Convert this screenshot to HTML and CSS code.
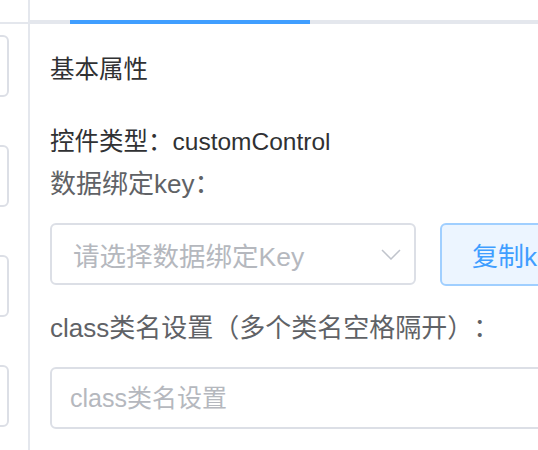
FILE: index.html
```html
<!DOCTYPE html>
<html lang="zh-CN">
<head>
  <meta charset="UTF-8">
  <meta name="viewport" content="width=device-width, initial-scale=1.0">
  <title>控件属性</title>
  <link rel="stylesheet" href="styles.css">
</head>
<body>
  <div class="page">
    <aside class="side">
      <div class="side-head"></div>
      <div class="side-list">
        <div class="side-box"></div>
        <div class="side-box"></div>
        <div class="side-box"></div>
        <div class="side-box"></div>
      </div>
    </aside>
    <section class="panel">
      <div class="tabs">
        <div class="tab active"></div>
      </div>
      <div class="panel-body">
        <h3 class="title">基本属性</h3>
        <div class="info">控件类型：customControl</div>
        <label class="label first">数据绑定key：</label>
        <div class="key-row">
          <div class="select">
            <span class="placeholder">请选择数据绑定Key</span>
            <svg class="arrow" width="20" height="11" viewBox="0 0 20 11">
              <polyline points="1,1 10,10 19,1" fill="none" stroke="#c0c4cc" stroke-width="1.5"/>
            </svg>
          </div>
          <button class="btn-copy">复制key</button>
        </div>
        <label class="label second">class类名设置（多个类名空格隔开）：</label>
        <input class="text-input" type="text" placeholder="class类名设置">
      </div>
    </section>
  </div>
</body>
</html>
```

FILE: styles.css
```css
body { margin: 0; font-family: "Liberation Sans", "Noto Sans CJK SC", sans-serif; background: #fff; text-spacing-trim: space-all; }
.page { display: flex; height: 450px; overflow: hidden; }

/* left strip */
.side { width: 28px; flex: none; border-right: 2px solid #e4e7ed; overflow: hidden; }
.side-head { height: 22px; border-bottom: 2px solid #e4e7ed; }
.side-list { display: flex; flex-direction: column; gap: 48px; padding-top: 11px; }
.side-box { width: 60px; height: 58px; margin-left: -55px; border: 2px solid #dcdfe6; border-radius: 6px; }

/* right panel */
.panel { flex: 1; overflow: hidden; }
.tabs { display: flex; height: 24px; padding-left: 40px; box-shadow: inset 0 -4px 0 #e4e7ed; box-sizing: border-box; }
.tab { width: 240px; }
.tab.active { border-bottom: 4px solid #409eff; }

.panel-body { padding: 26px 0 0 20px; }
.title { margin: 0; font-size: 24.5px; font-weight: normal; line-height: 40px; color: #303133; }
.info { margin-top: 31px; font-size: 24.5px; line-height: 42px; color: #303133; }
.label { display: block; font-size: 26px; line-height: 42px; color: #606266; }
.label.second { margin-top: 22px; line-height: 40px; }

.key-row { display: flex; gap: 24px; margin-top: 18px; width: 560px; }
.select { width: 367px; height: 62px; box-sizing: border-box; border: 2px solid #dcdfe6; border-radius: 6px; display: flex; align-items: center; justify-content: space-between; padding: 0 13px 0 21px; }
.placeholder { font-size: 26.5px; color: #b5b8be; }
.arrow { display: block; }
.btn-copy { width: 170px; height: 63px; flex: none; border: 2px solid #a0cfff; border-radius: 6px; background: #ecf5ff; color: #409eff; font: 26px "Liberation Sans", "Noto Sans CJK SC", sans-serif; text-align: left; padding: 0 0 0 30px; }

.text-input { display: block; margin-top: 19px; width: 540px; height: 62px; box-sizing: border-box; border: 2px solid #dcdfe6; border-radius: 6px; padding: 0 0 0 18px; font: 25px "Liberation Sans", "Noto Sans CJK SC", sans-serif; color: #606266; outline: none; }
.text-input::placeholder { color: #b5b8be; }
```
